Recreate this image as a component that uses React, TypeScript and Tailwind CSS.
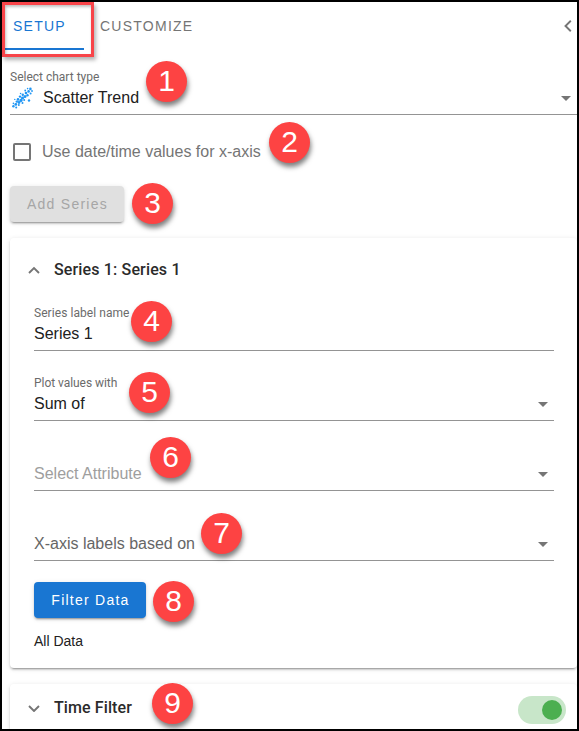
import type { ReactNode } from "react";

const DOTS = [
  [1.4, 19.2, 1.2], [4.2, 20.6, 1], [3.8, 17.4, 1.4], [1.4, 16.4, 0.8], [6.8, 18, 1],
  [4.8, 14.6, 1.2], [7, 15.5, 1.4], [6, 12.4, 1.3], [9, 13.4, 1.6], [2.8, 12.4, 0.7],
  [8, 9.6, 1.2], [10.5, 11, 1.6], [12.2, 13, 1], [10.8, 7.8, 1.2], [13, 9.5, 1.5],
  [8.6, 6.5, 0.8], [14, 6, 1.3], [15.5, 8.2, 1.2], [13.2, 3.5, 0.9], [16.6, 4.4, 1.3],
  [18.6, 6.6, 1], [18.4, 1.9, 1.3], [20, 4, 0.9], [17, 13.5, 1.2], [10.5, 16, 1],
  [15.6, 1.6, 0.8],
];

function ScatterIcon() {
  return (
    <svg width="21" height="22" viewBox="0 0 21 22" fill="#2196f3">
      {DOTS.map(([x, y, r]) => (
        <circle key={`${x}-${y}`} cx={x} cy={y} r={r} />
      ))}
    </svg>
  );
}

function Caret() {
  return (
    <svg width="10" height="5" viewBox="0 0 10 5" fill="#757575">
      <path d="M0 0h10L5 5z" />
    </svg>
  );
}

function Chevron({ d, width, height }: { d: string; width: number; height: number }) {
  return (
    <svg width={width} height={height} viewBox={`0 0 ${width} ${height}`} fill="none" stroke="#757575" strokeWidth="1.9">
      <path d={d} />
    </svg>
  );
}

type FieldProps = {
  label?: string;
  labelClass?: string;
  children: ReactNode;
  valueClass?: string;
  select?: boolean;
};

function Field({ label, labelClass = "", children, valueClass = "text-[#212121]", select = true }: FieldProps) {
  return (
    <div className="flex h-[70px] flex-col justify-end border-b border-[#949494] pb-1">
      {label && (
        <div className={`mb-0.5 font-[Roboto,sans-serif] text-xs leading-[14px] text-[#6b6b6b] ${labelClass}`}>
          {label}
        </div>
      )}
      <div className="flex h-6 items-center justify-between">
        <span className={`text-base leading-6 ${valueClass}`}>{children}</span>
        {select && (
          <span className="mr-[6px]">
            <Caret />
          </span>
        )}
      </div>
    </div>
  );
}

function Badge({ n, place }: { n: number; place: string }) {
  return (
    <div
      className={`absolute flex h-[41px] w-[41px] items-center justify-center rounded-full bg-[#fd4343] pb-0.5 text-[30px] leading-none text-white shadow-[1px_4px_5px_rgba(0,0,0,0.5)] ${place}`}
    >
      {n}
    </div>
  );
}

const CARD_SHADOW =
  "shadow-[0_3px_1px_-2px_rgba(0,0,0,0.2),0_2px_2px_0_rgba(0,0,0,0.14),0_1px_5px_0_rgba(0,0,0,0.12)]";

export default function App() {
  return (
    <div className="relative h-[731px] w-[579px] overflow-hidden border-2 border-black bg-white font-['Liberation_Sans',Arial,sans-serif]">
      <header className="flex h-12 items-center justify-between pr-[5px] text-sm tracking-[1.25px]">
        <nav className="flex h-full">
          <div className="ml-[3px] flex h-full w-[79px] items-center border-b-2 border-[#1976d2] pl-2 pt-0.5 text-[#1976d2]">
            SETUP
          </div>
          <div className="flex items-center pl-4 text-[#757575]">CUSTOMIZE</div>
        </nav>
        <Chevron d="M6.8 0.8L1.5 6l5.3 5.2" width={8} height={12} />
      </header>

      <div className="-mt-[5px] ml-2">
        <Field label="Select chart type">
          <span className="flex items-center gap-2.5 pl-0.5">
            <ScatterIcon />
            Scatter Trend
          </span>
        </Field>
      </div>

      <label className="ml-[11px] mt-[27px] flex h-5 items-center gap-[11px] text-base text-[#757575]">
        <span className="h-[18px] w-[18px] rounded-[2px] border-2 border-[#757575]" />
        Use date/time values for x-axis
      </label>

      <button className={`ml-2 mt-6 block h-9 w-[114px] rounded bg-[#e0e0e0] pl-px text-sm tracking-[1.25px] text-[#a6a6a6] ${CARD_SHADOW}`}>
        Add Series
      </button>

      <section className={`ml-2 mt-4 h-[430px] rounded px-6 ${CARD_SHADOW}`}>
        <h2 className="-ml-1.5 flex h-[44px] items-end gap-[14px] font-[Roboto,sans-serif] text-base font-medium leading-6 tracking-[0.15px] text-[#2b2b2b]">
          <span className="flex h-6 items-center">
            <Chevron d="M1 7l5-5 5 5" width={12} height={8} />
          </span>
          Series 1: Series 1
        </h2>
        <div className="-mt-px w-[520px]">
          <Field label="Series label name" labelClass="tracking-[0.06px]" select={false}>
            Series 1
          </Field>
          <Field label="Plot values with" labelClass="-tracking-[0.05px]">Sum of</Field>
          <Field valueClass="text-[#9e9e9e]">Select Attribute</Field>
          <Field valueClass="text-[#666]">X-axis labels based on</Field>
        </div>
        <button className={`mt-[21px] block h-9 w-28 rounded bg-[#1976d2] pl-px text-sm tracking-[1.25px] text-white ${CARD_SHADOW}`}>
          Filter Data
        </button>
        <p className="mt-[13px] text-sm text-[#212121]">All Data</p>
      </section>

      <section className={`ml-2 mt-4 flex h-[60px] items-start justify-between rounded pl-[18px] pr-[11px] pt-3 ${CARD_SHADOW}`}>
        <h2 className="flex h-6 items-center gap-[14px] font-[Roboto,sans-serif] text-base font-medium tracking-[0.1px] text-[#2b2b2b]">
          <Chevron d="M1 2l5 5 5-5" width={12} height={8} />
          Time Filter
        </h2>
        <div className="flex h-7 w-12 items-center justify-end rounded-full bg-[#c8e6c9] pr-1">
          <span className="h-5 w-5 rounded-full bg-[#4caf50]" />
        </div>
      </section>

      <div className="absolute left-0 top-0 h-[55px] w-[92px] border-[3px] border-[#f84449] shadow-[2px_3px_4px_rgba(0,0,0,0.3),inset_1px_2px_3px_rgba(0,0,0,0.25)]" />
      <Badge n={1} place="left-[144px] top-[59px]" />
      <Badge n={2} place="left-[267px] top-[120px]" />
      <Badge n={3} place="left-[130px] top-[181px]" />
      <Badge n={4} place="left-[129px] top-[299px]" />
      <Badge n={5} place="left-[127px] top-[370px]" />
      <Badge n={6} place="left-[148px] top-[435px]" />
      <Badge n={7} place="left-[199px] top-[511px]" />
      <Badge n={8} place="left-[151px] top-[579px]" />
      <Badge n={9} place="left-[150px] top-[681px]" />
    </div>
  );
}
